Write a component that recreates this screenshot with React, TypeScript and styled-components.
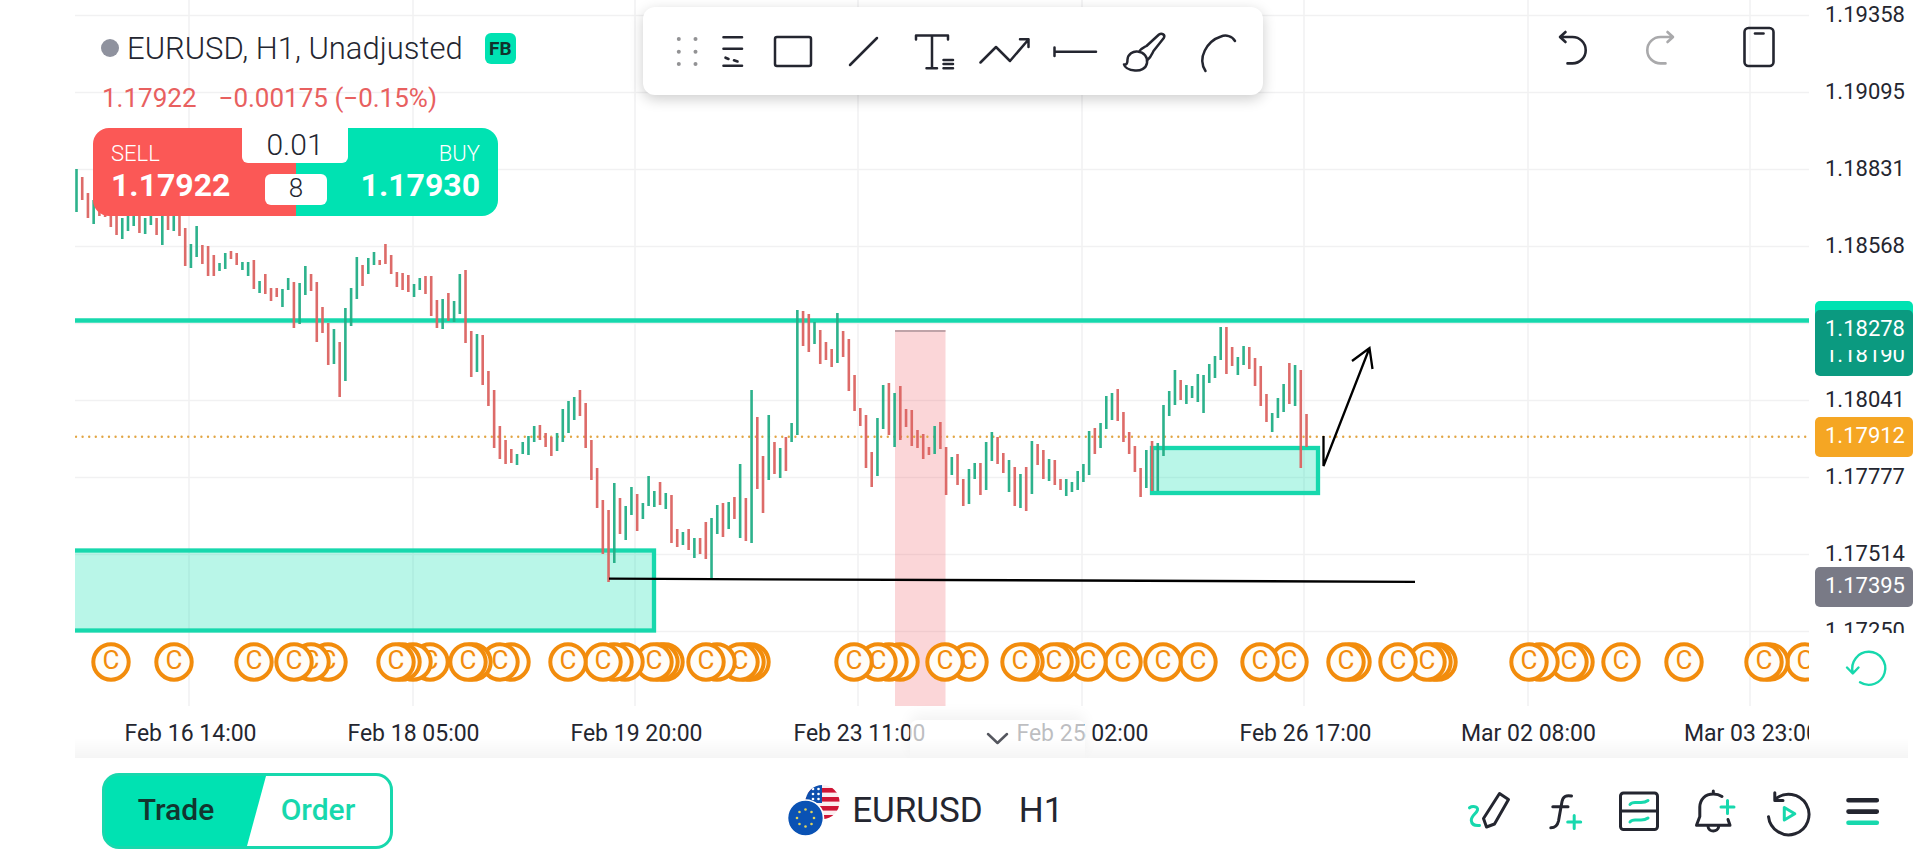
import React from "react";
import styled, { createGlobalStyle, css } from "styled-components";

const color = {
  ink: "#242630",
  mint: "#00e2b2",
  teal: "#17d8ad",
  red: "#fb5856",
  quote: "#e8605f",
  up: "#22ae86",
  down: "#dc6461",
  amber: "#f28c0c",
  grid: "#f1f1f2",
};

const GlobalStyle = createGlobalStyle`
  * { box-sizing: border-box; }
  body { margin: 0; background: #fff; color: ${color.ink}; font-family: Roboto, "Liberation Sans", sans-serif; }
  button, input { font: inherit; color: inherit; border: 0; margin: 0; padding: 0; background: none; }
  button { cursor: pointer; }
  svg { display: block; overflow: visible; }
`;

/* ---------- data ---------- */

// One entry per hour: direction (g up, r down), high y, low y.
const barData =
  "g169-212 r177-200 r193-218 g200-224 r200-216 r202-217 r204-227 r206-235 g218-239 g210-231 g208-226 r206-233 g218-234 g206-225 r218-235 g208-245 r206-230 g206-231 r208-236 r228-266 " +
  "g244-268 g226-257 r245-264 r246-276 r255-276 g263-271 g253-269 r251-259 r253-265 g262-270 g262-276 r260-289 g281-293 r274-294 r288-301 r288-297 g289-307 g278-290 r282-328 g283-324 " +
  "g266-295 r274-291 r282-342 r307-333 r323-365 g329-364 r342-397 g308-381 g288-326 g257-299 r265-286 g258-274 g252-265 r260-265 r244-264 r255-274 r272-287 r273-290 r275-292 g284-297 " +
  "g278-290 r276-294 r276-316 r300-328 g299-329 r293-321 g301-322 g274-314 r270-343 r331-377 g334-372 r335-385 r371-406 r390-448 r426-459 r440-464 r449-463 g454-465 g442-454 g436-455 " +
  "g426-442 r425-440 r433-447 r437-456 g433-451 g409-442 g401-433 g397-420 r390-416 r403-448 r440-480 r468-508 r500-554 r510-582 g483-563 r498-534 g506-540 g487-515 r494-531 g503-519 " +
  "g476-506 g491-507 r482-505 g493-509 r495-543 r529-547 g532-545 r529-550 g538-558 r538-554 r522-559 g518-578 g505-534 r503-537 g502-529 r497-519 g464-538 r498-541 g390-543 r417-489 " +
  "r456-513 g415-480 r442-474 g448-478 r437-471 g423-442 g310-435 r311-346 r314-352 g322-344 r330-364 r342-360 r349-367 g313-363 r331-357 r339-391 r375-411 r408-426 r415-468 r452-487 " +
  "g418-476 g385-429 r383-435 g393-447 r386-440 r409-427 r410-446 r430-448 r434-459 r447-455 g426-454 r422-449 r447-495 g457-475 r454-485 r479-506 g469-504 g463-479 r463-495 g442-490 " +
  "g432-461 r437-464 r453-473 g460-492 r467-506 g474-508 r467-511 g441-494 r444-465 r450-479 g459-481 r460-485 r479-490 g479-496 g482-492 g471-490 g464-482 g431-475 r428-454 g423-448 " +
  "g396-429 g393-420 r389-421 r412-442 r432-454 r446-472 r468-497 g450-488 r441-491 g443-491 g405-456 g391-416 g370-405 r380-400 g385-404 g386-398 g374-402 g375-413 g364-383 g356-378 " +
  "g327-360 r327-374 r347-366 g357-375 g346-365 r347-369 r358-386 r366-406 r394-422 g413-432 g398-418 g384-412 r363-404 g365-406 r370-468 r414-447";

const bars = barData.split(" ").map((entry, i) => {
  const [high, low] = entry.slice(1).split("-").map(Number);
  return { x: 1.5 + i * 5.721, high, low, up: entry[0] === "g" };
});

const eventX = [
  36, 99, 179, 219, 236, 253, 321, 327, 338, 355, 393, 398, 425, 436, 493, 528, 539, 550, 579, 585, 590, 631,
  642, 665, 671, 676, 779, 803, 814, 825, 870, 894, 945, 950, 979, 985, 1013, 1048, 1088, 1123, 1185, 1214,
  1271, 1277, 1323, 1352, 1358, 1363, 1454, 1465, 1494, 1500, 1546, 1609, 1689, 1695, 1730,
];

// Earlier events lie on top; a letter is drawn only where the coin before leaves it room.
const events = eventX
  .map((x, i) => ({ x, lettered: i === 0 || x - eventX[i - 1] >= 16 }))
  .reverse();

const gridX = [114, 338, 560, 783, 1007, 1229, 1453, 1675];
const gridY = [15, 92, 169, 246, 323, 400, 477, 554, 631];
const prices = ["1.19358", "1.19095", "1.18831", "1.18568", "", "1.18041", "1.17777", "1.17514", "1.17250"];
const dates = [
  "Feb 16 14:00", "Feb 18 05:00", "Feb 19 20:00", "Feb 23 11:00",
  "Feb 25 02:00", "Feb 26 17:00", "Mar 02 08:00", "Mar 03 23:00",
];

/* ---------- layout ---------- */

const Page = styled.main`
  min-width: 1500px;
`;

const ChartArea = styled.section`
  position: relative;
  display: grid;
  grid-template-columns: minmax(0, 1fr) 111px;
  padding-left: 75px;
`;

const Plot = styled.div`
  overflow: hidden;
  min-width: 0;
`;

const PlotSvg = styled.svg`
  width: 100%;
  height: 706px;
  overflow: hidden;
`;

const TimeAxis = styled.ol`
  display: grid;
  grid-template-columns: repeat(8, 223px);
  margin: 0;
  padding: 2px 0 0 4px;
  list-style: none;
  height: 52px;
  font-size: 23px;
  line-height: 52px;
  text-align: center;
  white-space: nowrap;
`;

const PriceAxis = styled.aside`
  position: relative;
  font-size: 22px;
`;

const PriceList = styled.ol`
  display: flex;
  flex-direction: column;
  gap: 47px;
  height: 633px;
  margin: 0;
  padding: 0 15px 0 0;
  overflow: hidden;
  list-style: none;
  text-align: right;
  line-height: 30px;

  li { flex: none; height: 30px; }
`;

const PriceTag = styled.span<{ $top: number; $bg: string }>`
  position: absolute;
  top: ${(p) => p.$top}px;
  left: 6px;
  right: 7px;
  height: 40px;
  padding-right: 8px;
  border-radius: 5px;
  background: ${(p) => p.$bg};
  color: #fff;
  line-height: 38px;
  text-align: right;
`;

const ResetButton = styled.button`
  display: block;
  margin: 16px 0 0 39px;
`;

/* ---------- overlay ---------- */

const Overlay = styled.header`
  position: absolute;
  top: 0;
  left: 93px;
  right: 137px;
  display: flex;
  align-items: flex-start;
`;

const Quote = styled.div`
  width: 405px;
  flex: none;
  padding-top: 28px;
`;

const Title = styled.h1`
  display: flex;
  align-items: center;
  margin: 0;
  padding-left: 8px;
  height: 40px;
  font-size: 31px;
  font-weight: 300;
  white-space: nowrap;
`;

const Dot = styled.i`
  flex: none;
  width: 18px;
  height: 18px;
  margin-right: 8px;
  border-radius: 50%;
  background: #8f929e;
`;

const Badge = styled.span`
  flex: none;
  width: 31px;
  height: 31px;
  margin-left: 22px;
  border-radius: 6px;
  background: ${color.mint};
  color: #10332c;
  font-size: 19px;
  font-weight: 700;
  line-height: 31px;
  text-align: center;
`;

const Change = styled.p`
  display: flex;
  gap: 22px;
  margin: 14px 0;
  padding-left: 9px;
  color: ${color.quote};
  font-size: 26px;
  line-height: 32px;
  white-space: nowrap;
`;

const Ticket = styled.div`
  position: relative;
  display: grid;
  grid-template-columns: 1fr 1fr;
  height: 88px;
  border-radius: 16px;
  overflow: hidden;
`;

const Side = styled.button<{ $buy?: boolean }>`
  display: flex;
  flex-direction: column;
  justify-content: center;
  align-items: ${(p) => (p.$buy ? "flex-end" : "flex-start")};
  padding: 0 18px;
  background: ${(p) => (p.$buy ? color.mint : color.red)};
  color: #fff;
  font-size: 22px;
  font-weight: 300;
  line-height: 26px;

  strong { font-size: 32px; font-weight: 700; line-height: 36px; }
`;

const Volume = styled.input`
  position: absolute;
  top: 0;
  left: 149px;
  width: 106px;
  height: 35px;
  padding-bottom: 2px;
  border-radius: 0 0 6px 6px;
  background: #fff;
  font-size: 30px;
  font-weight: 300;
  text-align: center;
`;

const Spread = styled.output`
  position: absolute;
  top: 46px;
  left: 172px;
  width: 62px;
  height: 31px;
  border-radius: 6px;
  background: #fff;
  font-size: 26px;
  font-weight: 300;
  line-height: 29px;
  text-align: center;
`;

const Toolbar = styled.nav`
  display: flex;
  align-items: center;
  gap: 20px;
  height: 88px;
  margin: 7px 0 0 145px;
  padding: 0 24px 0 30px;
  border-radius: 12px;
  background: #fff;
  box-shadow: 0 4px 14px rgba(0, 0, 0, 0.2);
`;

const Actions = styled.div`
  display: flex;
  gap: 45px;
  margin: 23px 0 0 auto;
`;

const strokes = css`
  fill: none;
  stroke: currentColor;
  stroke-linecap: round;
  stroke-linejoin: round;
`;

const Glyph = styled.svg<{ $w?: number }>`
  ${strokes}
  stroke-width: ${(p) => p.$w ?? 2}px;
  .accent { stroke: ${color.teal}; }
`;

const IconButton = styled.button<{ $muted?: boolean }>`
  color: ${(p) => (p.$muted ? "#a9a9ab" : color.ink)};
`;

/* ---------- footer ---------- */

const Footer = styled.footer`
  position: relative;
  display: grid;
  grid-template-columns: 5fr 8fr;
  align-items: center;
  height: 106px;
  padding: 0 34px 0 102px;
  background: #fff;

  &::before {
    content: "";
    position: absolute;
    left: 75px;
    right: 12px;
    bottom: 100%;
    height: 20px;
    background: linear-gradient(rgba(0, 0, 0, 0), rgba(0, 0, 0, 0.04));
    pointer-events: none;
  }
`;

const Drawer = styled.button`
  position: absolute;
  left: 910px;
  bottom: 0;
  width: 175px;
  height: 38px;
  border-radius: 8px 8px 0 0;
  background: rgba(255, 255, 255, 0.7);
  box-shadow: 0 -6px 14px rgba(0, 0, 0, 0.05);
  color: #55575f;

  svg { margin-left: 75px; }
`;

const Switcher = styled.div`
  display: flex;
  width: 291px;
  height: 76px;
  border: 3px solid ${color.teal};
  border-radius: 17px;
  background: linear-gradient(90deg, ${color.mint} 50px, #fff 50px);
  overflow: hidden;
`;

const SwitchButton = styled.button<{ $active?: boolean }>`
  width: ${(p) => (p.$active ? 161 : 124)}px;
  padding-bottom: 3px;
  font-size: 30px;
  font-weight: 500;
  color: ${(p) => (p.$active ? "#12352f" : color.teal)};
  ${(p) =>
    p.$active
      ? css`
          padding-right: 19px;
          background: ${color.mint};
          clip-path: polygon(0 0, 100% 0, calc(100% - 19px) 100%, 0 100%);
        `
      : css`
          padding-right: 20px;
        `}
`;

const FooterMain = styled.div`
  display: flex;
  align-items: center;
  justify-content: space-between;
`;

const SymbolGroup = styled.div`
  display: flex;
  align-items: center;
  gap: 36px;
`;

const SymbolButton = styled.button`
  display: flex;
  align-items: center;
  gap: 11px;
  font-size: 35px;
  line-height: 40px;
`;

const Tools = styled.div`
  display: flex;
  gap: 27px;
`;

/* ---------- drawings ---------- */

const Coin = ({ x, lettered }: { x: number; lettered: boolean }) => (
  <g>
    <circle cx={x} cy={662} r={17.7} fill="#fffdf8" stroke={color.amber} strokeWidth={4} />
    {lettered && (
      <text x={x} y={669} textAnchor="middle" fontSize={26} fill={color.amber}>
        C
      </text>
    )}
  </g>
);

const PriceChart = () => (
  <PlotSvg viewBox="0 0 1734 706" preserveAspectRatio="xMaxYMin slice" role="img" aria-label="EURUSD hourly chart">
    {gridX.map((x) => (
      <line key={x} x1={x} x2={x} y1={0} y2={706} stroke={color.grid} strokeWidth={1.5} />
    ))}
    {gridY.map((y) => (
      <line key={y} x1={0} x2={1734} y1={y + 0.4} y2={y + 0.4} stroke={color.grid} strokeWidth={1.5} />
    ))}
    <rect x={-10} y={550.5} width={589} height={80} fill="rgba(23,224,178,.3)" stroke={color.teal} strokeWidth={4.3} />
    <rect x={820} y={330} width={50.5} height={376} fill="rgba(240,90,100,.25)" />
    <line x1={820} x2={870.5} y1={331} y2={331} stroke="#bfa3a8" strokeWidth={2} />
    <line x1={0} x2={1734} y1={320.5} y2={320.5} stroke={color.teal} strokeWidth={4.6} />
    <rect x={1077} y={448} width={166} height={45} fill="rgba(23,224,178,.3)" stroke={color.teal} strokeWidth={4.3} />
    <line
      x1={1} x2={1734} y1={436.8} y2={436.8}
      stroke="#e2a645" strokeWidth={2.4} strokeLinecap="round" strokeDasharray="0 6.6"
    />
    {bars.map((b) => (
      <line
        key={b.x} x1={b.x} x2={b.x} y1={b.high} y2={b.low}
        stroke={b.up ? color.up : color.down} strokeWidth={2.6} opacity={0.95}
      />
    ))}
    <g fill="none" stroke="#000" strokeWidth={2.3}>
      <path d="M534 578.7 L1340 581.8" />
      <path d="M1248.5 436 V466 L1294.5 348 M1277 361 L1294.5 348 L1297.5 369" />
    </g>
    {events.map((e) => (
      <Coin key={e.x} {...e} />
    ))}
  </PlotSvg>
);

const Flags = () => (
  <svg width={53} height={54} viewBox="0 0 53 54" aria-hidden="true">
    <defs>
      <clipPath id="us-round">
        <circle cx={34.5} cy={18} r={17} />
      </clipPath>
    </defs>
    <g clipPath="url(#us-round)">
      <rect x={17} y={0} width={36} height={36} fill="#fbeef0" />
      {[4, 13, 22, 31].map((y) => (
        <rect key={y} x={17} y={y} width={36} height={4.6} fill="#cf1535" />
      ))}
      <rect x={17} y={0} width={17} height={19} fill="#0d4fae" />
      {[5, 10, 15].map((y) => (
        <g key={y} fill="#fff">
          <circle cx={25} cy={y} r={1.3} />
          <circle cx={30.5} cy={y} r={1.3} />
        </g>
      ))}
    </g>
    <circle cx={17.5} cy={34} r={18} fill="#0a52b4" stroke="#fff" strokeWidth={1.6} />
    {Array.from({ length: 8 }, (_, i) => (
      <circle
        key={i}
        cx={17.5 + 8.5 * Math.cos((i * Math.PI) / 4)}
        cy={34 + 8.5 * Math.sin((i * Math.PI) / 4)}
        r={1.3}
        fill="#dfd35c"
      />
    ))}
  </svg>
);

const drawTools: { label: string; path: string }[] = [
  { label: "Rectangle", path: "M8 11h32a2 2 0 0 1 2 2v25a2 2 0 0 1-2 2H8a2 2 0 0 1-2-2V13a2 2 0 0 1 2-2z" },
  { label: "Trend line", path: "M11 39 38 12" },
  { label: "Text", path: "M7 13.5V9.5H39V13.5 M23 9.5V42 M17.5 42.2H28 M34.5 34H44 M34.5 38H44 M34.5 42.2H44" },
  { label: "Path", path: "M1.5 36.5 17 21 31 35 49.5 13.5 M41 13.2H49.5V21" },
  { label: "Horizontal ray", path: "M5.5 21.5V30 M5.5 25.7H47" },
  {
    label: "Brush",
    path: "M5 38.5C8 39 8.5 36.5 8.5 33.5C9 28 14 25 18.5 25.5C25 26 29 31 28 37C27 43 21 45 16 44.5C10 44 6 42 5 38.5Z M20 25.5C22 22 24 22 27.5 20L40 8.5C43 6.5 46.5 9 44.8 12L34.5 25C33 28 32 31 28.5 34",
  },
  { label: "Arc", path: "M46 15C43 10 37 8.5 32 10.5C18 15 8 32 16.5 45" },
];

export default function App() {
  return (
    <Page>
      <GlobalStyle />
      <ChartArea>
        <Plot>
          <PriceChart />
          <TimeAxis>
            {dates.map((d) => (
              <li key={d}>{d}</li>
            ))}
          </TimeAxis>
        </Plot>

        <PriceAxis>
          <PriceList>
            {prices.map((p, i) => (
              <li key={i}>{p}</li>
            ))}
          </PriceList>
          <PriceTag $top={301} $bg={color.mint} />
          <PriceTag $top={336} $bg="#0b9a80">1.18190</PriceTag>
          <PriceTag $top={310} $bg="#0b9a80">1.18278</PriceTag>
          <PriceTag $top={417} $bg="#f5a623">1.17912</PriceTag>
          <PriceTag $top={567} $bg="#797a86">1.17395</PriceTag>
          <ResetButton aria-label="Reset scale">
            <Glyph $w={2.4} width={40} height={40} viewBox="0 0 40 40" color={color.teal}>
              <path d="M12 33.3A16.5 16.5 0 1 0 4.8 23.5 M-1 18.5 4.8 24.5 10.5 18.5" />
            </Glyph>
          </ResetButton>
        </PriceAxis>

        <Overlay>
          <Quote>
            <Title>
              <Dot />
              EURUSD, H1, Unadjusted
              <Badge>FB</Badge>
            </Title>
            <Change>
              <span>1.17922</span>
              <span>−0.00175 (−0.15%)</span>
            </Change>
            <Ticket>
              <Side>
                SELL<strong>1.17922</strong>
              </Side>
              <Side $buy>
                BUY<strong>1.17930</strong>
              </Side>
              <Volume aria-label="Volume" defaultValue="0.01" />
              <Spread aria-label="Spread">8</Spread>
            </Ticket>
          </Quote>

          <Toolbar aria-label="Drawing tools">
            <svg width={28} height={50} viewBox="0 0 28 50" fill="#929294" aria-hidden="true">
              {[13, 25.7, 38].map((y) => (
                <g key={y}>
                  <circle cx={5.8} cy={y} r={2} />
                  <circle cx={22.5} cy={y} r={2} />
                </g>
              ))}
            </svg>
            <IconButton aria-label="Fibonacci">
              <Glyph $w={2.6} width={28} height={50} viewBox="0 0 28 50">
                <path d="M2.5 11.3H21 M2.5 22.7H21 M2.5 39.7H21 M4.5 31.7 7.5 33 M13 34.3 16.5 35.5" />
              </Glyph>
            </IconButton>
            {drawTools.map((t) => (
              <IconButton key={t.label} aria-label={t.label}>
                <Glyph $w={2.5} width={50} height={50} viewBox="0 0 50 50">
                  <path d={t.path} />
                </Glyph>
              </IconButton>
            ))}
          </Toolbar>

          <Actions>
            <IconButton aria-label="Undo">
              <Glyph $w={2.6} width={48} height={48} viewBox="0 0 48 48">
                <path d="M16.5 9 11 14 16.5 19 M11.5 14H23.5A13.2 13.2 0 0 1 23.5 40.4H18.5" />
              </Glyph>
            </IconButton>
            <IconButton aria-label="Redo" $muted>
              <Glyph $w={2.6} width={48} height={48} viewBox="0 0 48 48">
                <path d="M25.5 9 31 14 25.5 19 M30.5 14H18.5A13.2 13.2 0 0 0 18.5 40.4H23.5" />
              </Glyph>
            </IconButton>
            <IconButton aria-label="Rotate screen">
              <Glyph $w={2.6} width={48} height={48} viewBox="0 0 48 48">
                <rect x={9.5} y={5} width={29} height={38} rx={4} />
                <path d="M20 10.5H28.5" />
              </Glyph>
            </IconButton>
          </Actions>
        </Overlay>

        <Drawer aria-label="Collapse panel">
          <Glyph $w={2.5} width={24} height={14} viewBox="0 0 24 14">
            <path d="M3 2 12.5 11 22 2" />
          </Glyph>
        </Drawer>
      </ChartArea>

      <Footer>
        <Switcher>
          <SwitchButton $active>Trade</SwitchButton>
          <SwitchButton>Order</SwitchButton>
        </Switcher>
        <FooterMain>
          <SymbolGroup>
            <SymbolButton>
              <Flags />
              EURUSD
            </SymbolButton>
            <SymbolButton>H1</SymbolButton>
          </SymbolGroup>
          <Tools>
            <IconButton aria-label="Draw">
              <Glyph $w={3} width={48} height={48} viewBox="0 0 48 48">
                <path className="accent" d="M6.5 20.8C9 19 15.5 19 14.5 23C13.5 26.5 8 29 8.3 33.5C8.8 38 13 38.8 16.5 38.5" />
                <path d="M36.5 6.5 45.5 12.5 31.5 37 23.5 40 20.5 31.5Z" />
              </Glyph>
            </IconButton>
            <IconButton aria-label="Indicators">
              <Glyph $w={3} width={48} height={48} viewBox="0 0 48 48">
                <path d="M33.5 9C28 7.8 25 9.5 24 14.5L20.5 34C19.5 38.5 17 40.8 12.8 40.8 M14.8 19.7H30" />
                <path className="accent" d="M36.2 28.5V41.5 M29.7 35H42.7" />
              </Glyph>
            </IconButton>
            <IconButton aria-label="Layouts">
              <Glyph $w={3} width={48} height={48} viewBox="0 0 48 48">
                <rect x={7.5} y={6} width={37} height={36.5} rx={3} />
                <path d="M7.5 24H44.5" />
                <path className="accent" d="M17 17.5C19 14.5 22 15.5 25 15.5S31 16.5 35 13.5 M17 35C19 32 22 33 25 33S31 34 35 31" />
              </Glyph>
            </IconButton>
            <IconButton aria-label="Create alert">
              <Glyph $w={3} width={48} height={48} viewBox="0 0 48 48">
                <path d="M25.3 4V7 M34 9.5C31 7.5 28 7 25.3 7C17 7 12 12.5 11.8 20V29.5L8.5 38.3H42L40 32.5 M20 39.5C20.5 45.5 30 45.5 30.7 39.5" />
                <path className="accent" d="M39.5 13.5V26.5 M33 20H46" />
              </Glyph>
            </IconButton>
            <IconButton aria-label="Replay">
              <Glyph $w={3} width={48} height={48} viewBox="0 0 48 48">
                <path d="M5.5 29.7A20.3 20.3 0 1 0 12 12.5 M11.8 5.8V13.5H20" />
                <path className="accent" d="M21.3 20.5V33L31.8 26.7Z" />
              </Glyph>
            </IconButton>
            <IconButton aria-label="Menu">
              <Glyph $w={4.6} width={48} height={48} viewBox="0 0 48 48">
                <path d="M10.5 13.3H38.8 M10.5 24.6H38.8" />
                <path className="accent" d="M10.5 35.8H38.8" />
              </Glyph>
            </IconButton>
          </Tools>
        </FooterMain>
      </Footer>
    </Page>
  );
}
